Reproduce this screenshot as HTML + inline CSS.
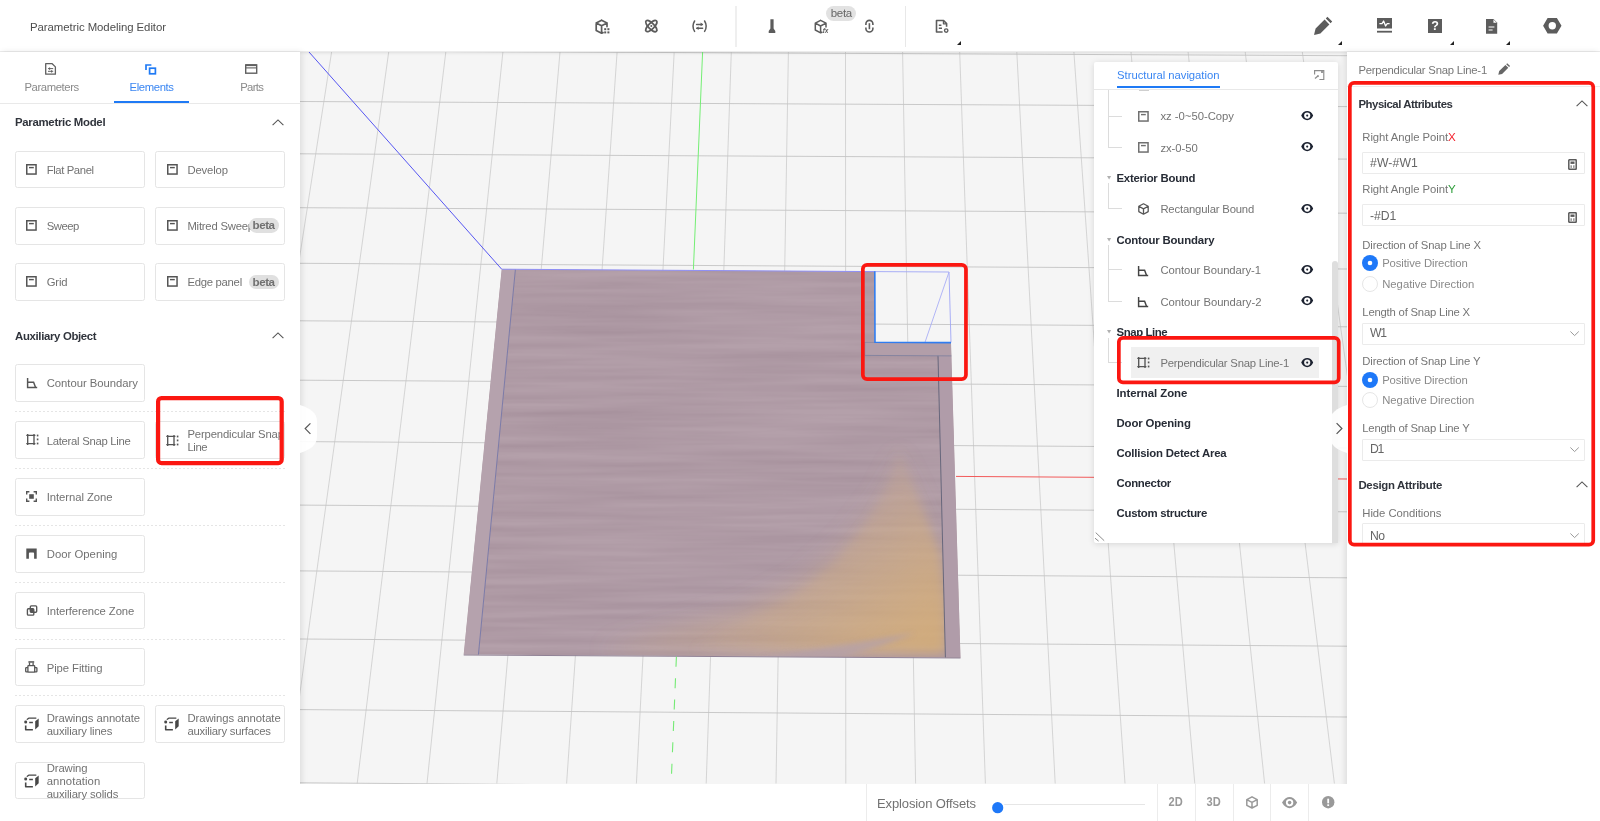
<!DOCTYPE html>
<html lang="en"><head><meta charset="utf-8"><title>Parametric Modeling Editor</title>
<style>
html,body{margin:0;padding:0;width:1600px;height:821px;overflow:hidden;background:#fff;font-family:"Liberation Sans", sans-serif;}
.t{position:absolute;white-space:nowrap;line-height:16px;}
svg{overflow:visible}
#app{position:absolute;left:0;top:0;width:1600px;height:821px;will-change:transform;}
</style></head><body><div id="app">
<svg style="position:absolute;left:300px;top:52px;background:#f5f5f5;overflow:hidden" width="1047" height="731.5" viewBox="0 0 1047 731.5"><g stroke="#c4c4c4" stroke-width="0.9" fill="none"><line x1="-139.7" y1="0" x2="-291.8" y2="731.5" stroke="#cbcbcb" stroke-width="0.8"/><line x1="-82.6" y1="0" x2="-222.0" y2="731.5" stroke="#cbcbcb" stroke-width="0.8"/><line x1="-25.5" y1="0" x2="-152.2" y2="731.5" stroke="#cbcbcb" stroke-width="0.8"/><line x1="31.6" y1="0" x2="-82.4" y2="731.5" stroke="#cbcbcb" stroke-width="0.8"/><line x1="88.7" y1="0" x2="-12.6" y2="731.5" stroke="#cbcbcb" stroke-width="0.8"/><line x1="145.8" y1="0" x2="57.2" y2="731.5" stroke="#cbcbcb" stroke-width="0.8"/><line x1="202.9" y1="0" x2="127.0" y2="731.5" stroke="#cbcbcb" stroke-width="0.8"/><line x1="260.0" y1="0" x2="196.8" y2="731.5" stroke="#cbcbcb" stroke-width="0.8"/><line x1="317.1" y1="0" x2="266.6" y2="731.5" stroke="#cbcbcb" stroke-width="0.8"/><line x1="374.2" y1="0" x2="336.4" y2="731.5" stroke="#cbcbcb" stroke-width="0.8"/><line x1="431.3" y1="0" x2="406.2" y2="731.5" stroke="#cbcbcb" stroke-width="0.8"/><line x1="488.4" y1="0" x2="476.0" y2="731.5" stroke="#cbcbcb" stroke-width="0.8"/><line x1="545.5" y1="0" x2="545.8" y2="731.5" stroke="#cbcbcb" stroke-width="0.8"/><line x1="602.6" y1="0" x2="615.6" y2="731.5" stroke="#cbcbcb" stroke-width="0.8"/><line x1="659.7" y1="0" x2="685.4" y2="731.5" stroke="#cbcbcb" stroke-width="0.8"/><line x1="716.8" y1="0" x2="755.2" y2="731.5" stroke="#cbcbcb" stroke-width="0.8"/><line x1="773.9" y1="0" x2="825.0" y2="731.5" stroke="#cbcbcb" stroke-width="0.8"/><line x1="831.0" y1="0" x2="894.8" y2="731.5" stroke="#cbcbcb" stroke-width="0.8"/><line x1="888.1" y1="0" x2="964.6" y2="731.5" stroke="#cbcbcb" stroke-width="0.8"/><line x1="945.2" y1="0" x2="1034.4" y2="731.5" stroke="#cbcbcb" stroke-width="0.8"/><line x1="1002.3" y1="0" x2="1104.2" y2="731.5" stroke="#cbcbcb" stroke-width="0.8"/><line x1="1059.4" y1="0" x2="1174.0" y2="731.5" stroke="#cbcbcb" stroke-width="0.8"/><line x1="1116.5" y1="0" x2="1243.8" y2="731.5" stroke="#cbcbcb" stroke-width="0.8"/><line x1="1173.6" y1="0" x2="1313.6" y2="731.5" stroke="#cbcbcb" stroke-width="0.8"/><line x1="0" y1="-1.2" x2="1047" y2="3.7"/><line x1="0" y1="49.5" x2="1047" y2="54.6"/><line x1="0" y1="101.8" x2="1047" y2="107.1"/><line x1="0" y1="155.7" x2="1047" y2="161.2"/><line x1="0" y1="211.3" x2="1047" y2="217.0"/><line x1="0" y1="268.8" x2="1047" y2="274.8"/><line x1="0" y1="328.2" x2="1047" y2="334.4"/><line x1="0" y1="389.6" x2="1047" y2="396.0"/><line x1="0" y1="453.1" x2="1047" y2="459.8"/><line x1="0" y1="518.9" x2="1047" y2="525.8"/><line x1="0" y1="587.0" x2="1047" y2="594.2"/><line x1="0" y1="657.6" x2="1047" y2="665.0"/><line x1="0" y1="730.8" x2="1047" y2="738.5"/></g><defs>
<filter id="grain" x="0" y="0" width="100%" height="100%" color-interpolation-filters="sRGB"><feTurbulence type="fractalNoise" baseFrequency="0.005 0.12" numOctaves="3" seed="11" result="n"/><feColorMatrix in="n" type="matrix" values="0 0 0 0 0.50  0 0 0 0 0.40  0 0 0 0 0.46  0.36 0 0 0 -0.085"/></filter>
<filter id="blur6" x="-20%" y="-20%" width="140%" height="140%"><feGaussianBlur stdDeviation="5"/></filter>
<filter id="blur12" x="-30%" y="-30%" width="160%" height="160%"><feGaussianBlur stdDeviation="11"/></filter>
<linearGradient id="og2" gradientUnits="userSpaceOnUse" x1="500" y1="440" x2="560" y2="620"><stop offset="0" stop-color="#dab278" stop-opacity="0.05"/><stop offset="1" stop-color="#dab278" stop-opacity="0.45"/></linearGradient>
<filter id="blur3" x="-20%" y="-20%" width="140%" height="140%"><feGaussianBlur stdDeviation="2.5"/></filter>
<linearGradient id="og" gradientUnits="userSpaceOnUse" x1="520" y1="465" x2="640" y2="575"><stop offset="0" stop-color="#dab278" stop-opacity="0.04"/><stop offset="0.5" stop-color="#dab278" stop-opacity="0.36"/><stop offset="1" stop-color="#d6ae76" stop-opacity="0.74"/></linearGradient>
<clipPath id="woodclip"><polygon points="201.7,217.2 574.7,219.6 574.9,290.2 651.0,290.7 660.5,605.7 163.7,602.6"/></clipPath>
</defs><polygon points="201.7,217.2 574.7,219.6 574.9,290.2 651.0,290.7 660.5,605.7 163.7,602.6" fill="#b4a0aa"/><g clip-path="url(#woodclip)"><rect x="150" y="210" width="520" height="400" filter="url(#grain)" opacity="1"/><polygon points="598.7,394.0 640.0,502.0 644.8,548.0 645.2,601.0 300.0,599.0 360.0,580.0 440.0,558.0 500.0,528.0 545.0,488.0 578.0,443.0" fill="url(#og2)" filter="url(#blur12)"/><polygon points="598.7,396.0 640.0,502.0 644.8,548.0 645.2,601.0 390.0,598.0 430.0,574.0 490.0,546.0 535.0,510.0 568.0,468.0 588.0,432.0" fill="url(#og)" filter="url(#blur6)"/><polygon points="460.0,606.0 615.0,581.0 580.0,594.0 540.0,606.0" fill="#b4a0aa" opacity="0.7" filter="url(#blur3)"/><polygon points="201.7,217.2 215.4,217.3 178.4,602.7 163.7,602.6" fill="#b5a2ad"/><polygon points="638.0,303.8 651.4,303.9 660.5,605.7 645.4,605.6" fill="#b09ca9"/><polygon points="564.6,290.2 651.0,290.7 651.4,303.9 564.6,303.4" fill="#b29ea9"/></g><g stroke="#6f73a8" stroke-width="0.9" fill="none" opacity="0.9"><line x1="215.39999999999998" y1="217.3" x2="178.39999999999998" y2="602.7"/><line x1="638" y1="303.8" x2="645.4" y2="605.6" stroke="#565a72"/><line x1="564.6" y1="303.4" x2="651.4" y2="303.9" stroke="#7c7f9e"/><line x1="564.6" y1="290.4" x2="575" y2="290.4" stroke="#8a86a0"/><line x1="564.8" y1="290.2" x2="564.8" y2="303" stroke="#8a86a0"/></g><line x1="163.7" y1="603" x2="660.5" y2="606" stroke="#8f8094" stroke-width="1"/><line x1="9" y1="0" x2="201.7" y2="217.2" stroke="#5656f2" stroke-width="1"/><line x1="201.7" y1="217.2" x2="574.7" y2="219.60000000000002" stroke="#8f8ff5" stroke-width="1"/><line x1="402.6" y1="0" x2="393.4" y2="217.5" stroke="#74ee74" stroke-width="1"/><line x1="376.4" y1="604.8" x2="371.5" y2="723" stroke="#74ea74" stroke-width="1.1" stroke-dasharray="10 11.4"/><line x1="656" y1="424.4" x2="1047" y2="427" stroke="#f25a5a" stroke-width="1"/><polyline points="574.8,219.6 649.0,220.0 651.0,290.5" fill="none" stroke="#9fa6f6" stroke-width="0.9"/><line x1="649" y1="220" x2="625" y2="290.3" stroke="#a9aef6" stroke-width="0.9"/><polyline points="574.8,219.2 575.0,290.3 651.0,290.6" fill="none" stroke="#2f7cf0" stroke-width="1.6"/></svg>
<div style="position:absolute;left:0px;top:0px;width:1600px;height:52px;background:#fff;box-shadow:0 1px 3px rgba(0,0,0,0.10);border-bottom:1px solid #ececec;box-sizing:border-box;"></div>
<span class="t" style="left:30.00px;top:18.75px;font-size:11.4px;font-weight:400;color:#4d4d4d;letter-spacing:-0.053px;">Parametric Modeling Editor</span>
<div style="position:absolute;left:735.3px;top:5.8px;width:1.5px;height:41px;background:#efefef"></div>
<div style="position:absolute;left:905px;top:5.8px;width:1.1px;height:41px;background:#e8e8e8"></div>
<div style="position:absolute;left:826.3px;top:5.7px;width:29.6px;height:15px;background:#e2e2e2;border-radius:7.5px;"></div>
<span class="t" style="left:830.70px;top:4.65px;font-size:11.5px;font-weight:400;color:#666;letter-spacing:-0.298px;">beta</span>
<svg style="position:absolute;left:594px;top:18px;" width="17" height="17" viewBox="0 0 17 17"><g fill="none" stroke="#5c5c5c" stroke-width="1.7" stroke-linejoin="round" stroke-linecap="round"><path d="M7.6 2.2 L13 5 L13 8.6 M9 14.6 L7.6 15.2 L2.2 12.4 L2.2 5 L7.6 2.2 M2.2 5 L7.6 7.8 L13 5 M7.6 7.8 L7.6 15.2"/></g><g fill="#5c5c5c"><rect x="10.2" y="10.2" width="2" height="2"/><rect x="13.4" y="10.2" width="2" height="2"/><rect x="10.2" y="13.4" width="2" height="2"/><rect x="13.4" y="13.4" width="2" height="2"/></g></svg>
<svg style="position:absolute;left:644px;top:19px;" width="14" height="14" viewBox="0 0 14 14"><g fill="none" stroke="#5c5c5c" stroke-width="1.7"><ellipse cx="7.3" cy="7.1" rx="7.3" ry="2.9" transform="rotate(45 7.3 7.1)"/><ellipse cx="7.3" cy="7.1" rx="7.3" ry="2.9" transform="rotate(-45 7.3 7.1)"/></g><circle cx="7.3" cy="7.1" r="1" fill="#5c5c5c"/></svg>
<svg style="position:absolute;left:692px;top:20px;" width="15" height="12" viewBox="0 0 15 12"><g fill="none" stroke="#5c5c5c" stroke-width="1.5" stroke-linecap="round"><path d="M2.6 1 Q-0.6 6.2 2.6 11.4"/><path d="M12.6 1 Q15.8 6.2 12.6 11.4"/><path d="M4.6 4.4 L10.4 4.4 M4.8 8.2 L10.6 8.2"/></g><path d="M8.6 2.6 L11.2 4.4 L8.6 6.2 Z M6.6 6.4 L4 8.2 L6.6 10 Z" fill="#5c5c5c"/></svg>
<svg style="position:absolute;left:768px;top:19px;" width="8" height="14" viewBox="0 0 8 14"><path d="M2.4 0.2 H5.6 V9.6 L7.3 12 V13.9 H0.7 V12 L2.4 9.6 Z" fill="#5c5c5c"/></svg>
<svg style="position:absolute;left:814px;top:19px;" width="16" height="15" viewBox="0 0 16 15"><g fill="none" stroke="#5c5c5c" stroke-width="1.5" stroke-linejoin="round" stroke-linecap="round"><path d="M6.6 1.4 L12 4.2 L12 8 M8 13.2 L6.6 13.8 L1.3 11 L1.3 4.2 L6.6 1.4 M1.3 4.2 L6.6 7 L12 4.2 M6.6 7 L6.6 13.8"/></g></svg>
<span class="t" style="left:822.80px;top:23.25px;font-size:6.5px;font-weight:700;color:#5c5c5c;font-style:italic;letter-spacing:-0.2px;">fx</span>
<svg style="position:absolute;left:864px;top:19px;" width="11" height="15" viewBox="0 0 11 15"><g fill="none" stroke="#5c5c5c" stroke-width="1.6" stroke-linecap="butt"><path d="M1.9 6 V4.9 A3.5 3.5 0 0 1 8.9 4.9 V6"/><path d="M1.9 8.4 V9.5 A3.5 3.5 0 0 0 8.9 9.5 V8.4"/><path d="M5.4 4.2 V10.2"/></g></svg>
<svg style="position:absolute;left:935px;top:19px;" width="15" height="15" viewBox="0 0 15 15"><g fill="none" stroke="#5c5c5c" stroke-width="1.6" stroke-linejoin="round"><path d="M7.6 13 H1.5 V1.5 H8.6 L11.6 4.6 V7.8"/><path d="M8.4 1.8 V4.8 H11.4" stroke-width="1.2"/><path d="M3.8 6.2 H6.4 M3.8 9.2 H7" stroke-width="1.4"/><circle cx="11.2" cy="11.6" r="1.7" stroke-width="1.4"/></g></svg>
<svg style="position:absolute;left:957.2px;top:41px;" width="4" height="4" viewBox="0 0 4 4"><polygon points="4,0 4,4 0,4" fill="#222"/></svg>
<svg style="position:absolute;left:1313px;top:16px;" width="20" height="20" viewBox="0 0 20 20"><path d="M1 19 L2.6 12.6 L11.6 3.6 L16.4 8.4 L7.4 17.4 Z M12.8 2.4 L14.4 0.8 L19.2 5.6 L17.6 7.2 Z" fill="#5c5c5c"/></svg>
<svg style="position:absolute;left:1337.5px;top:41px;" width="4" height="4" viewBox="0 0 4 4"><polygon points="4,0 4,4 0,4" fill="#222"/></svg>
<svg style="position:absolute;left:1377px;top:18px;" width="15" height="15" viewBox="0 0 15 15"><rect x="0" y="0" width="15" height="10.5" fill="#5c5c5c"/><rect x="0" y="12.8" width="15" height="1.8" fill="#5c5c5c"/><path d="M2.4 5.6 H5 L6.6 3 L8.6 8 L10.2 5.6 H12.6" fill="none" stroke="#fff" stroke-width="1.3" stroke-linejoin="round"/></svg>
<div style="position:absolute;left:1427.7px;top:18.5px;width:14.6px;height:14.6px;background:#5c5c5c;"></div>
<span class="t" style="left:1431.18px;top:17.65px;font-size:12.5px;font-weight:700;color:#fff;">?</span>
<svg style="position:absolute;left:1450px;top:41px;" width="4" height="4" viewBox="0 0 4 4"><polygon points="4,0 4,4 0,4" fill="#222"/></svg>
<svg style="position:absolute;left:1485.8px;top:18.5px;" width="11.2" height="14.8" viewBox="0 0 11.2 14.8"><path d="M0 0 H7.2 L11.2 4 V14.8 H0 Z" fill="#5c5c5c"/><path d="M7.2 0 V4 H11.2 Z" fill="#fff" stroke="#5c5c5c" stroke-width="0.5"/><path d="M2.6 8 H8.4 M2.6 11 H6.6" stroke="#fff" stroke-width="1.2"/></svg>
<svg style="position:absolute;left:1506px;top:41px;" width="4" height="4" viewBox="0 0 4 4"><polygon points="4,0 4,4 0,4" fill="#222"/></svg>
<svg style="position:absolute;left:1543px;top:18px;" width="18.6" height="15.6" viewBox="0 0 18.6 15.6"><path fill-rule="evenodd" d="M0.1 7.8 L4.6 0 H13.9 L18.5 7.8 L13.9 15.6 H4.6 Z M9.3 4.1 A3.7 3.7 0 1 0 9.3 11.5 A3.7 3.7 0 1 0 9.3 4.1 Z" fill="#5c5c5c"/></svg>
<div style="position:absolute;left:0px;top:52px;width:300px;height:769px;background:#fff;box-shadow:2px 0 6px rgba(0,0,0,0.10);"></div>
<div style="position:absolute;left:0px;top:103px;width:300px;height:1px;background:#e9e9e9;"></div>
<div style="position:absolute;left:114.2px;top:101px;width:75.1px;height:2.3px;background:#1f7af5;"></div>
<span class="t" style="left:24.45px;top:78.65px;font-size:11.3px;font-weight:400;color:#8a8a8a;letter-spacing:-0.409px;">Parameters</span>
<span class="t" style="left:129.60px;top:78.65px;font-size:11.3px;font-weight:400;color:#3a86f2;letter-spacing:-0.387px;">Elements</span>
<span class="t" style="left:240.20px;top:78.65px;font-size:11.3px;font-weight:400;color:#8a8a8a;letter-spacing:-0.635px;">Parts</span>
<svg style="position:absolute;left:45px;top:63.4px;" width="11.2" height="12" viewBox="0 0 11.2 12"><path d="M0.7 0.7 H7.2 L10.4 3.9 V11.2 H0.7 Z" fill="none" stroke="#606060" stroke-width="1.3" stroke-linejoin="round"/><path d="M3 5.6 H8.2 M3 8.3 H8.2" stroke="#606060" stroke-width="1"/><path d="M4.6 4.5 V6.7 M6.6 7.2 V9.4" stroke="#606060" stroke-width="1.1"/></svg>
<svg style="position:absolute;left:145px;top:64.3px;" width="11.4" height="10.6" viewBox="0 0 11.4 10.6"><path d="M1 6 V1 H6.4" fill="none" stroke="#1f7af5" stroke-width="1.7"/><rect x="4.6" y="4.2" width="5.8" height="5.6" fill="none" stroke="#1f7af5" stroke-width="1.7"/></svg>
<svg style="position:absolute;left:244.6px;top:64.4px;" width="12.4" height="10" viewBox="0 0 12.4 10"><rect x="0.7" y="0.9" width="11" height="8.3" fill="none" stroke="#606060" stroke-width="1.4"/><path d="M0.7 1.2 H11.7" stroke="#606060" stroke-width="1.8"/><path d="M0.7 3.9 H11.7" stroke="#606060" stroke-width="1.1"/></svg>
<span class="t" style="left:15.00px;top:114.45px;font-size:11.4px;font-weight:700;color:#30343c;letter-spacing:-0.292px;">Parametric Model</span>
<svg style="position:absolute;left:272.4px;top:118.8px;" width="12" height="7" viewBox="0 0 12 7"><path d="M0.6 6.2 L6 0.9 L11.4 6.2" fill="none" stroke="#555" stroke-width="1.1"/></svg>
<div style="position:absolute;left:15px;top:151px;width:129.5px;height:37px;border:1px solid #e5e5e5;border-radius:2.5px;box-sizing:border-box;background:#fff;"></div>
<div style="position:absolute;left:155.2px;top:151px;width:129.6px;height:37px;border:1px solid #e5e5e5;border-radius:2.5px;box-sizing:border-box;background:#fff;"></div>
<svg style="position:absolute;left:26.2px;top:163.9px;" width="11" height="11" viewBox="0 0 11 11"><rect x="0.75" y="0.75" width="9.3" height="9.3" fill="none" stroke="#555" stroke-width="1.5"/><rect x="3" y="2.9" width="4.8" height="1.4" fill="#555"/></svg>
<svg style="position:absolute;left:166.8px;top:163.9px;" width="11" height="11" viewBox="0 0 11 11"><rect x="0.75" y="0.75" width="9.3" height="9.3" fill="none" stroke="#555" stroke-width="1.5"/><rect x="3" y="2.9" width="4.8" height="1.4" fill="#555"/></svg>
<span class="t" style="left:46.70px;top:161.95px;font-size:11.3px;font-weight:400;color:#727272;letter-spacing:-0.388px;">Flat Panel</span>
<span class="t" style="left:187.40px;top:161.95px;font-size:11.3px;font-weight:400;color:#727272;letter-spacing:-0.136px;">Develop</span>
<div style="position:absolute;left:15px;top:207px;width:129.5px;height:38px;border:1px solid #e5e5e5;border-radius:2.5px;box-sizing:border-box;background:#fff;"></div>
<div style="position:absolute;left:155.2px;top:207px;width:129.6px;height:38px;border:1px solid #e5e5e5;border-radius:2.5px;box-sizing:border-box;background:#fff;"></div>
<svg style="position:absolute;left:26.2px;top:219.9px;" width="11" height="11" viewBox="0 0 11 11"><rect x="0.75" y="0.75" width="9.3" height="9.3" fill="none" stroke="#555" stroke-width="1.5"/><rect x="3" y="2.9" width="4.8" height="1.4" fill="#555"/></svg>
<svg style="position:absolute;left:166.8px;top:219.9px;" width="11" height="11" viewBox="0 0 11 11"><rect x="0.75" y="0.75" width="9.3" height="9.3" fill="none" stroke="#555" stroke-width="1.5"/><rect x="3" y="2.9" width="4.8" height="1.4" fill="#555"/></svg>
<span class="t" style="left:46.70px;top:217.95px;font-size:11.3px;font-weight:400;color:#727272;letter-spacing:-0.469px;">Sweep</span>
<span class="t" style="left:187.40px;top:217.95px;font-size:11.3px;font-weight:400;color:#727272;letter-spacing:-0.215px;">Mitred Sweep</span>
<div style="position:absolute;left:15px;top:263px;width:129.5px;height:38px;border:1px solid #e5e5e5;border-radius:2.5px;box-sizing:border-box;background:#fff;"></div>
<div style="position:absolute;left:155.2px;top:263px;width:129.6px;height:38px;border:1px solid #e5e5e5;border-radius:2.5px;box-sizing:border-box;background:#fff;"></div>
<svg style="position:absolute;left:26.2px;top:275.9px;" width="11" height="11" viewBox="0 0 11 11"><rect x="0.75" y="0.75" width="9.3" height="9.3" fill="none" stroke="#555" stroke-width="1.5"/><rect x="3" y="2.9" width="4.8" height="1.4" fill="#555"/></svg>
<svg style="position:absolute;left:166.8px;top:275.9px;" width="11" height="11" viewBox="0 0 11 11"><rect x="0.75" y="0.75" width="9.3" height="9.3" fill="none" stroke="#555" stroke-width="1.5"/><rect x="3" y="2.9" width="4.8" height="1.4" fill="#555"/></svg>
<span class="t" style="left:46.70px;top:273.95px;font-size:11.3px;font-weight:400;color:#727272;letter-spacing:-0.161px;">Grid</span>
<span class="t" style="left:187.40px;top:273.95px;font-size:11.3px;font-weight:400;color:#727272;letter-spacing:-0.267px;">Edge panel</span>
<div style="position:absolute;left:248.7px;top:218.2px;width:30.2px;height:14.8px;background:#e0e0e0;border-radius:7.4px;"></div>
<span class="t" style="left:252.60px;top:217.25px;font-size:11.6px;font-weight:700;color:#707070;letter-spacing:-0.461px;">beta</span>
<div style="position:absolute;left:248.7px;top:274.5px;width:30.2px;height:14.8px;background:#e0e0e0;border-radius:7.4px;"></div>
<span class="t" style="left:252.60px;top:273.55px;font-size:11.6px;font-weight:700;color:#707070;letter-spacing:-0.461px;">beta</span>
<span class="t" style="left:15.00px;top:327.95px;font-size:11.4px;font-weight:700;color:#30343c;letter-spacing:-0.340px;">Auxiliary Object</span>
<svg style="position:absolute;left:272.4px;top:332.1px;" width="12" height="7" viewBox="0 0 12 7"><path d="M0.6 6.2 L6 0.9 L11.4 6.2" fill="none" stroke="#555" stroke-width="1.1"/></svg>
<div style="position:absolute;left:15px;top:364px;width:129.5px;height:37.6px;border:1px solid #e5e5e5;border-radius:2.5px;box-sizing:border-box;background:#fff;"></div>
<svg style="position:absolute;left:25.8px;top:378.2px;" width="12" height="11" viewBox="0 0 12 11"><path d="M1.6 0 V9.5 H11.2 M1.6 4.2 H7.6 L9.6 9.5" fill="none" stroke="#555" stroke-width="1.45"/></svg>
<span class="t" style="left:46.70px;top:375.35px;font-size:11.3px;font-weight:400;color:#727272;letter-spacing:-0.031px;">Contour Boundary</span>
<div style="position:absolute;left:15px;top:411px;width:270px;height:1px;background:repeating-linear-gradient(90deg,#e5e5e5 0 2px,transparent 2px 4px);"></div>
<div style="position:absolute;left:15px;top:421.2px;width:129.5px;height:37.6px;border:1px solid #e5e5e5;border-radius:2.5px;box-sizing:border-box;background:#fff;"></div>
<svg style="position:absolute;left:25.8px;top:434.4px;" width="13" height="11" viewBox="0 0 13 11"><path d="M1.7 0.1 V10.9 M8 0.1 V10.9 M0.3 1.4 H9.4 M0.3 9.6 H9.4" fill="none" stroke="#555" stroke-width="1.35"/><g fill="#555"><rect x="10.8" y="0.6" width="1.6" height="1.8"/><rect x="10.8" y="4.5" width="1.6" height="1.8"/><rect x="10.8" y="8.6" width="1.6" height="1.8"/></g></svg>
<span class="t" style="left:46.70px;top:432.55px;font-size:11.3px;font-weight:400;color:#727272;letter-spacing:-0.280px;">Lateral Snap Line</span>
<div style="position:absolute;left:15px;top:468px;width:270px;height:1px;background:repeating-linear-gradient(90deg,#e5e5e5 0 2px,transparent 2px 4px);"></div>
<div style="position:absolute;left:15px;top:478px;width:129.5px;height:37.6px;border:1px solid #e5e5e5;border-radius:2.5px;box-sizing:border-box;background:#fff;"></div>
<svg style="position:absolute;left:25.8px;top:491.2px;" width="11" height="11" viewBox="0 0 11 11"><path d="M0.7 3.4 V0.7 H3.4 M7.6 0.7 H10.3 V3.4 M10.3 7.6 V10.3 H7.6 M3.4 10.3 H0.7 V7.6" fill="none" stroke="#555" stroke-width="1.4"/><rect x="3.2" y="3.2" width="4.6" height="4.6" fill="#555"/></svg>
<span class="t" style="left:46.70px;top:489.35px;font-size:11.3px;font-weight:400;color:#727272;letter-spacing:-0.068px;">Internal Zone</span>
<div style="position:absolute;left:15px;top:525px;width:270px;height:1px;background:repeating-linear-gradient(90deg,#e5e5e5 0 2px,transparent 2px 4px);"></div>
<div style="position:absolute;left:15px;top:535px;width:129.5px;height:37.6px;border:1px solid #e5e5e5;border-radius:2.5px;box-sizing:border-box;background:#fff;"></div>
<svg style="position:absolute;left:25.8px;top:548.2px;" width="11" height="11" viewBox="0 0 11 11"><path d="M0.3 0.5 H10.7 V10.7 H8.1 V5.4 Q8.1 4.5 7.2 4.5 H3.8 Q2.9 4.5 2.9 5.4 V10.7 H0.3 Z" fill="#555"/></svg>
<span class="t" style="left:46.70px;top:546.35px;font-size:11.3px;font-weight:400;color:#727272;letter-spacing:0.030px;">Door Opening</span>
<div style="position:absolute;left:15px;top:582px;width:270px;height:1px;background:repeating-linear-gradient(90deg,#e5e5e5 0 2px,transparent 2px 4px);"></div>
<div style="position:absolute;left:15px;top:591.6px;width:129.5px;height:37.6px;border:1px solid #e5e5e5;border-radius:2.5px;box-sizing:border-box;background:#fff;"></div>
<svg style="position:absolute;left:25.8px;top:604.8000000000001px;" width="12" height="11.4" viewBox="0 0 12 11.4"><g fill="none" stroke="#555" stroke-width="1.35"><rect x="4.3" y="0.9" width="6.4" height="6.4" rx="1"/><rect x="1.4" y="3.8" width="6.4" height="6.4" rx="1"/></g><rect x="4.3" y="3.8" width="3.5" height="3.5" fill="#555"/></svg>
<span class="t" style="left:46.70px;top:602.95px;font-size:11.3px;font-weight:400;color:#727272;letter-spacing:-0.099px;">Interference Zone</span>
<div style="position:absolute;left:15px;top:639px;width:270px;height:1px;background:repeating-linear-gradient(90deg,#e5e5e5 0 2px,transparent 2px 4px);"></div>
<div style="position:absolute;left:15px;top:648.2px;width:129.5px;height:37.6px;border:1px solid #e5e5e5;border-radius:2.5px;box-sizing:border-box;background:#fff;"></div>
<svg style="position:absolute;left:25.400000000000002px;top:661.3000000000001px;" width="13" height="12" viewBox="0 0 13 12"><g fill="none" stroke="#555" stroke-width="1.3"><rect x="3.4" y="0.2" width="5.8" height="1.5" fill="#555" stroke="none"/><path d="M4.5 1.6 V4.6 M8.1 1.6 V4.6"/><rect x="2.9" y="4.6" width="6.8" height="6.6" rx="0.6"/><path d="M2.9 6.6 H1.4 Q0.7 6.6 0.7 7.3 V10.2 Q0.7 10.9 1.4 10.9 H2.9 M9.7 6.6 H11.2 Q11.9 6.6 11.9 7.3 V10.2 Q11.9 10.9 11.2 10.9 H9.7"/></g></svg>
<span class="t" style="left:46.70px;top:659.55px;font-size:11.3px;font-weight:400;color:#727272;letter-spacing:-0.068px;">Pipe Fitting</span>
<div style="position:absolute;left:15px;top:695px;width:270px;height:1px;background:repeating-linear-gradient(90deg,#e5e5e5 0 2px,transparent 2px 4px);"></div>
<div style="position:absolute;left:155.2px;top:421.2px;width:129.6px;height:37.6px;border:1px solid #e5e5e5;border-radius:2.5px;box-sizing:border-box;background:#fff;"></div>
<svg style="position:absolute;left:166.2px;top:434.6px;" width="13" height="11" viewBox="0 0 13 11"><path d="M1.7 0.1 V10.9 M8 0.1 V10.9 M0.3 1.4 H9.4 M0.3 9.6 H9.4" fill="none" stroke="#555" stroke-width="1.35"/><g fill="#555"><rect x="10.8" y="0.6" width="1.6" height="1.8"/><rect x="10.8" y="4.5" width="1.6" height="1.8"/><rect x="10.8" y="8.6" width="1.6" height="1.8"/></g></svg>
<span class="t" style="left:187.40px;top:425.85px;font-size:11.3px;font-weight:400;color:#727272;letter-spacing:-0.152px;clip-path:inset(0 3px 0 0);">Perpendicular Snap</span>
<span class="t" style="left:187.40px;top:439.05px;font-size:11.3px;font-weight:400;color:#727272;letter-spacing:-0.390px;">Line</span>
<div style="position:absolute;left:15px;top:704.6px;width:129.5px;height:38px;border:1px solid #e5e5e5;border-radius:2.5px;box-sizing:border-box;background:#fff;"></div>
<div style="position:absolute;left:155.2px;top:704.6px;width:129.6px;height:38px;border:1px solid #e5e5e5;border-radius:2.5px;box-sizing:border-box;background:#fff;"></div>
<svg style="position:absolute;left:24px;top:717.3px;" width="15.4" height="14" viewBox="0 0 15.4 14"><path d="M3.3 2.3 L5.1 1.05 H11.9" fill="none" stroke="#484848" stroke-width="1.35" stroke-linejoin="round" stroke-linecap="round"/><path d="M11.2 4.3 L14.7 1.4 V9.3 L11.2 12.5 Z" fill="#484848"/><path d="M1.7 8.6 V12.8 H8.9" fill="none" stroke="#484848" stroke-width="1.6" stroke-linejoin="round"/><circle cx="1.7" cy="5.1" r="1.5" fill="#484848"/><path d="M5.2 5.5 H8.9" stroke="#484848" stroke-width="1.5"/></svg>
<svg style="position:absolute;left:164.4px;top:717.3px;" width="15.4" height="14" viewBox="0 0 15.4 14"><path d="M3.3 2.3 L5.1 1.05 H11.9" fill="none" stroke="#484848" stroke-width="1.35" stroke-linejoin="round" stroke-linecap="round"/><path d="M11.2 4.3 L14.7 1.4 V9.3 L11.2 12.5 Z" fill="#484848"/><path d="M1.7 8.6 V12.8 H8.9" fill="none" stroke="#484848" stroke-width="1.6" stroke-linejoin="round"/><circle cx="1.7" cy="5.1" r="1.5" fill="#484848"/><path d="M5.2 5.5 H8.9" stroke="#484848" stroke-width="1.5"/></svg>
<span class="t" style="left:46.70px;top:710.25px;font-size:11.3px;font-weight:400;color:#727272;letter-spacing:-0.053px;">Drawings annotate</span>
<span class="t" style="left:46.70px;top:723.15px;font-size:11.3px;font-weight:400;color:#727272;letter-spacing:-0.154px;">auxiliary lines</span>
<span class="t" style="left:187.40px;top:710.25px;font-size:11.3px;font-weight:400;color:#727272;letter-spacing:-0.053px;">Drawings annotate</span>
<span class="t" style="left:187.40px;top:723.15px;font-size:11.3px;font-weight:400;color:#727272;letter-spacing:-0.221px;">auxiliary surfaces</span>
<div style="position:absolute;left:15px;top:761.6px;width:129.5px;height:37.6px;border:1px solid #e5e5e5;border-radius:2.5px;box-sizing:border-box;background:#fff;"></div>
<svg style="position:absolute;left:24px;top:773.8px;" width="15.4" height="14" viewBox="0 0 15.4 14"><path d="M3.3 2.3 L5.1 1.05 H11.9" fill="none" stroke="#484848" stroke-width="1.35" stroke-linejoin="round" stroke-linecap="round"/><path d="M11.2 4.3 L14.7 1.4 V9.3 L11.2 12.5 Z" fill="#484848"/><path d="M1.7 8.6 V12.8 H8.9" fill="none" stroke="#484848" stroke-width="1.6" stroke-linejoin="round"/><circle cx="1.7" cy="5.1" r="1.5" fill="#484848"/><path d="M5.2 5.5 H8.9" stroke="#484848" stroke-width="1.5"/></svg>
<span class="t" style="left:46.70px;top:759.65px;font-size:11.3px;font-weight:400;color:#727272;letter-spacing:-0.105px;">Drawing</span>
<span class="t" style="left:46.70px;top:772.75px;font-size:11.3px;font-weight:400;color:#727272;letter-spacing:0.092px;">annotation</span>
<span class="t" style="left:46.70px;top:785.85px;font-size:11.3px;font-weight:400;color:#727272;letter-spacing:-0.123px;">auxiliary solids</span>
<svg style="position:absolute;left:300px;top:405px;" width="18" height="48" viewBox="0 0 18 48"><path d="M0 0 C10 3 17 8 17 16 V32 C17 40 10 45 0 48 Z" fill="#fff" fill-opacity="0.92"/><path d="M10.4 18.4 L5.2 23.6 L10.4 28.8" fill="none" stroke="#555" stroke-width="1.2"/></svg>
<div style="position:absolute;left:1347px;top:52px;width:253px;height:769px;background:#fff;box-shadow:-2px 0 6px rgba(0,0,0,0.10);"></div>
<span class="t" style="left:1358.40px;top:61.55px;font-size:11.3px;font-weight:400;color:#777;letter-spacing:-0.207px;">Perpendicular Snap Line-1</span>
<svg style="position:absolute;left:1498px;top:63.3px;" width="12.4" height="12" viewBox="0 0 12.4 12"><path d="M0.3 11.8 L1.2 8 L7.4 1.9 L10.3 4.8 L4.1 11 Z M8.2 1.2 L9.2 0.2 L12.1 3.1 L11.1 4.1 Z" fill="#666"/></svg>
<div style="position:absolute;left:1347px;top:86px;width:253px;height:1px;background:#ececec;"></div>
<span class="t" style="left:1358.40px;top:95.95px;font-size:11.4px;font-weight:700;color:#30343c;letter-spacing:-0.461px;">Physical Attributes</span>
<svg style="position:absolute;left:1576.3px;top:100.1px;" width="12" height="7" viewBox="0 0 12 7"><path d="M0.6 6.2 L6 0.9 L11.4 6.2" fill="none" stroke="#555" stroke-width="1.1"/></svg>
<span class="t" style="left:1362.30px;top:128.85px;font-size:11.3px;font-weight:400;color:#767676;letter-spacing:-0.057px;">Right Angle Point</span>
<span class="t" style="left:1448.10px;top:128.85px;font-size:11.6px;font-weight:400;color:#f5222d;">X</span>
<div style="position:absolute;left:1361.9px;top:152px;width:223.1px;height:22px;border:1px solid #ebebeb;border-radius:1px;box-sizing:border-box;background:#fff;"></div>
<span class="t" style="left:1370.00px;top:155.35px;font-size:12.2px;font-weight:400;color:#666;letter-spacing:0.135px;">#W-#W1</span>
<svg style="position:absolute;left:1568.3px;top:159.20000000000002px;" width="9" height="11" viewBox="0 0 9 11"><rect x="0.8" y="0.8" width="7.4" height="9.4" rx="0.5" fill="none" stroke="#5a5a5a" stroke-width="1.5"/><rect x="2.5" y="2.5" width="4" height="2.4" fill="#5a5a5a"/><g fill="#5a5a5a" opacity="0.75"><rect x="2.5" y="6.3" width="1.3" height="2.6"/><rect x="5.2" y="6.3" width="1.3" height="2.6"/></g></svg>
<span class="t" style="left:1362.30px;top:181.25px;font-size:11.3px;font-weight:400;color:#767676;letter-spacing:-0.057px;">Right Angle Point</span>
<span class="t" style="left:1448.10px;top:181.25px;font-size:11.6px;font-weight:400;color:#2e9e3a;">Y</span>
<div style="position:absolute;left:1361.9px;top:204px;width:223.1px;height:22px;border:1px solid #ebebeb;border-radius:1px;box-sizing:border-box;background:#fff;"></div>
<span class="t" style="left:1370.00px;top:207.65px;font-size:12.2px;font-weight:400;color:#666;letter-spacing:-0.005px;">-#D1</span>
<svg style="position:absolute;left:1568.3px;top:211.8px;" width="9" height="11" viewBox="0 0 9 11"><rect x="0.8" y="0.8" width="7.4" height="9.4" rx="0.5" fill="none" stroke="#5a5a5a" stroke-width="1.5"/><rect x="2.5" y="2.5" width="4" height="2.4" fill="#5a5a5a"/><g fill="#5a5a5a" opacity="0.75"><rect x="2.5" y="6.3" width="1.3" height="2.6"/><rect x="5.2" y="6.3" width="1.3" height="2.6"/></g></svg>
<span class="t" style="left:1362.30px;top:236.65px;font-size:11.3px;font-weight:400;color:#767676;letter-spacing:-0.139px;">Direction of Snap Line X</span>
<svg style="position:absolute;left:1362px;top:255.10000000000002px;" width="16" height="16" viewBox="0 0 16 16"><circle cx="8" cy="8" r="8" fill="#1e78f8"/><circle cx="8" cy="8" r="2.3" fill="#fff"/></svg>
<span class="t" style="left:1382.20px;top:255.35px;font-size:11.3px;font-weight:400;color:#8a8a8a;letter-spacing:-0.105px;">Positive Direction</span>
<svg style="position:absolute;left:1362px;top:276px;" width="16" height="16" viewBox="0 0 16 16"><circle cx="8" cy="8" r="7.5" fill="#fff" stroke="#e6e6e6" stroke-width="1"/></svg>
<span class="t" style="left:1382.20px;top:275.95px;font-size:11.3px;font-weight:400;color:#8a8a8a;letter-spacing:-0.006px;">Negative Direction</span>
<span class="t" style="left:1362.30px;top:304.05px;font-size:11.3px;font-weight:400;color:#767676;letter-spacing:-0.201px;">Length of Snap Line X</span>
<div style="position:absolute;left:1361.9px;top:323px;width:223.1px;height:22px;border:1px solid #ebebeb;border-radius:1px;box-sizing:border-box;background:#fff;"></div>
<span class="t" style="left:1370.00px;top:325.25px;font-size:12.2px;font-weight:400;color:#666;letter-spacing:-1.341px;">W1</span>
<svg style="position:absolute;left:1570.4px;top:331.2px;" width="9.2" height="5.2" viewBox="0 0 9.2 5.2"><path d="M0.4 0.5 L4.6 4.6 L8.8 0.5" fill="none" stroke="#999" stroke-width="1"/></svg>
<span class="t" style="left:1362.30px;top:352.65px;font-size:11.3px;font-weight:400;color:#767676;letter-spacing:-0.151px;">Direction of Snap Line Y</span>
<svg style="position:absolute;left:1362px;top:371.8px;" width="16" height="16" viewBox="0 0 16 16"><circle cx="8" cy="8" r="8" fill="#1e78f8"/><circle cx="8" cy="8" r="2.3" fill="#fff"/></svg>
<span class="t" style="left:1382.20px;top:371.85px;font-size:11.3px;font-weight:400;color:#8a8a8a;letter-spacing:-0.105px;">Positive Direction</span>
<svg style="position:absolute;left:1362px;top:392.4px;" width="16" height="16" viewBox="0 0 16 16"><circle cx="8" cy="8" r="7.5" fill="#fff" stroke="#e6e6e6" stroke-width="1"/></svg>
<span class="t" style="left:1382.20px;top:392.25px;font-size:11.3px;font-weight:400;color:#8a8a8a;letter-spacing:-0.006px;">Negative Direction</span>
<span class="t" style="left:1362.30px;top:419.95px;font-size:11.3px;font-weight:400;color:#767676;letter-spacing:-0.210px;">Length of Snap Line Y</span>
<div style="position:absolute;left:1361.9px;top:439px;width:223.1px;height:22px;border:1px solid #ebebeb;border-radius:1px;box-sizing:border-box;background:#fff;"></div>
<span class="t" style="left:1370.00px;top:441.45px;font-size:12.2px;font-weight:400;color:#666;letter-spacing:-1.397px;">D1</span>
<svg style="position:absolute;left:1570.4px;top:447.4px;" width="9.2" height="5.2" viewBox="0 0 9.2 5.2"><path d="M0.4 0.5 L4.6 4.6 L8.8 0.5" fill="none" stroke="#999" stroke-width="1"/></svg>
<span class="t" style="left:1358.40px;top:476.85px;font-size:11.4px;font-weight:700;color:#30343c;letter-spacing:-0.286px;">Design Attribute</span>
<svg style="position:absolute;left:1576.3px;top:481.3px;" width="12" height="7" viewBox="0 0 12 7"><path d="M0.6 6.2 L6 0.9 L11.4 6.2" fill="none" stroke="#555" stroke-width="1.1"/></svg>
<span class="t" style="left:1362.30px;top:505.25px;font-size:11.3px;font-weight:400;color:#767676;letter-spacing:-0.051px;">Hide Conditions</span>
<div style="position:absolute;left:1361.9px;top:523px;width:223.1px;height:22px;border:1px solid #ebebeb;border-radius:1px;box-sizing:border-box;background:#fff;"></div>
<span class="t" style="left:1370.00px;top:527.55px;font-size:12.2px;font-weight:400;color:#666;letter-spacing:-0.597px;">No</span>
<svg style="position:absolute;left:1570.4px;top:532.6px;" width="9.2" height="5.2" viewBox="0 0 9.2 5.2"><path d="M0.4 0.5 L4.6 4.6 L8.8 0.5" fill="none" stroke="#999" stroke-width="1"/></svg>
<div style="position:absolute;left:1094px;top:61.8px;width:243.8px;height:481.4px;background:#fff;border-radius:2px;box-shadow:0 1px 6px rgba(0,0,0,0.13);"></div>
<span class="t" style="left:1117.10px;top:67.15px;font-size:11.3px;font-weight:400;color:#3a86f2;letter-spacing:-0.029px;">Structural navigation</span>
<div style="position:absolute;left:1117.1px;top:85.9px;width:102.6px;height:2.1px;background:#1f7af5;"></div>
<div style="position:absolute;left:1094px;top:89px;width:243.8px;height:1px;background:#e8e8e8;"></div>
<svg style="position:absolute;left:1313.6px;top:69.9px;" width="10.4" height="10" viewBox="0 0 10.4 10"><path d="M0.6 4.6 V0.6 H9.8 V9.5 H5.4" fill="none" stroke="#8c8c8c" stroke-width="1.15"/><rect x="7" y="1" width="2.5" height="2" fill="#9a9a9a"/><path d="M1 8.4 L4.2 5.8" stroke="#8c8c8c" stroke-width="1.3" fill="none"/><path d="M2.9 5.4 L4.9 5.2 L4.6 7.2 Z" fill="#8c8c8c"/></svg>
<div style="position:absolute;left:1108px;top:90px;width:1px;height:58px;background:#dcdcdc;"></div>
<div style="position:absolute;left:1108px;top:116px;width:13.6px;height:1px;background:#dcdcdc;"></div>
<div style="position:absolute;left:1108px;top:147.4px;width:13.6px;height:1px;background:#dcdcdc;"></div>
<div style="position:absolute;left:1138.6px;top:90px;width:10.4px;height:1px;background:#cfcfcf;"></div>
<div style="position:absolute;left:1108px;top:183px;width:1px;height:26px;background:#dcdcdc;"></div>
<div style="position:absolute;left:1108px;top:208.4px;width:13.6px;height:1px;background:#dcdcdc;"></div>
<div style="position:absolute;left:1108px;top:245px;width:1px;height:56px;background:#dcdcdc;"></div>
<div style="position:absolute;left:1108px;top:269.4px;width:13.6px;height:1px;background:#dcdcdc;"></div>
<div style="position:absolute;left:1108px;top:300.6px;width:13.6px;height:1px;background:#dcdcdc;"></div>
<div style="position:absolute;left:1108px;top:338px;width:1px;height:24.5px;background:#dcdcdc;"></div>
<div style="position:absolute;left:1108px;top:362px;width:13.6px;height:1px;background:#dcdcdc;"></div>
<svg style="position:absolute;left:1138px;top:111px;" width="11" height="11" viewBox="0 0 11 11"><rect x="0.75" y="0.75" width="9.3" height="9.3" fill="none" stroke="#707070" stroke-width="1.5"/><rect x="3" y="2.9" width="4.8" height="1.4" fill="#707070"/></svg>
<span class="t" style="left:1160.40px;top:108.25px;font-size:11.3px;font-weight:400;color:#747474;letter-spacing:-0.014px;">xz -0~50-Copy</span>
<svg style="position:absolute;left:1301.1px;top:110.9px;" width="12.4" height="9.2" viewBox="0 0 12.4 9.2"><path fill-rule="evenodd" d="M0.2 4.6 C1.4 1.4 3.8 0 6.2 0 C8.6 0 11 1.4 12.2 4.6 C11 7.8 8.6 9.2 6.2 9.2 C3.8 9.2 1.4 7.8 0.2 4.6 Z M6.2 1.5 A3.1 3.1 0 1 0 6.2 7.7 A3.1 3.1 0 1 0 6.2 1.5 Z" fill="#1c2230"/><circle cx="6.2" cy="4.6" r="1.05" fill="#1c2230"/></svg>
<svg style="position:absolute;left:1138px;top:142.3px;" width="11" height="11" viewBox="0 0 11 11"><rect x="0.75" y="0.75" width="9.3" height="9.3" fill="none" stroke="#707070" stroke-width="1.5"/><rect x="3" y="2.9" width="4.8" height="1.4" fill="#707070"/></svg>
<span class="t" style="left:1160.40px;top:139.55px;font-size:11.3px;font-weight:400;color:#747474;letter-spacing:-0.067px;">zx-0-50</span>
<svg style="position:absolute;left:1301.1px;top:142.20000000000002px;" width="12.4" height="9.2" viewBox="0 0 12.4 9.2"><path fill-rule="evenodd" d="M0.2 4.6 C1.4 1.4 3.8 0 6.2 0 C8.6 0 11 1.4 12.2 4.6 C11 7.8 8.6 9.2 6.2 9.2 C3.8 9.2 1.4 7.8 0.2 4.6 Z M6.2 1.5 A3.1 3.1 0 1 0 6.2 7.7 A3.1 3.1 0 1 0 6.2 1.5 Z" fill="#1c2230"/><circle cx="6.2" cy="4.6" r="1.05" fill="#1c2230"/></svg>
<svg style="position:absolute;left:1106.8px;top:176.4px;" width="4.2" height="3.4" viewBox="0 0 4.2 3.4"><path d="M0 0 H4.2 L2.1 3.4 Z" fill="#b0b0b0"/></svg>
<span class="t" style="left:1116.50px;top:170.05px;font-size:11.4px;font-weight:700;color:#272c36;letter-spacing:-0.249px;">Exterior Bound</span>
<svg style="position:absolute;left:1137.9px;top:203px;" width="11" height="12" viewBox="0 0 11 12"><path d="M5.5 0.8 L10.2 3.3 V8.6 L5.5 11.2 L0.8 8.6 V3.3 Z M0.8 3.3 L5.5 5.9 L10.2 3.3 M5.5 5.9 V11.2" fill="none" stroke="#555" stroke-width="1.3" stroke-linejoin="round"/></svg>
<span class="t" style="left:1160.40px;top:200.95px;font-size:11.3px;font-weight:400;color:#747474;letter-spacing:-0.178px;">Rectangular Bound</span>
<svg style="position:absolute;left:1301.1px;top:203.8px;" width="12.4" height="9.2" viewBox="0 0 12.4 9.2"><path fill-rule="evenodd" d="M0.2 4.6 C1.4 1.4 3.8 0 6.2 0 C8.6 0 11 1.4 12.2 4.6 C11 7.8 8.6 9.2 6.2 9.2 C3.8 9.2 1.4 7.8 0.2 4.6 Z M6.2 1.5 A3.1 3.1 0 1 0 6.2 7.7 A3.1 3.1 0 1 0 6.2 1.5 Z" fill="#1c2230"/><circle cx="6.2" cy="4.6" r="1.05" fill="#1c2230"/></svg>
<svg style="position:absolute;left:1106.8px;top:237.8px;" width="4.2" height="3.4" viewBox="0 0 4.2 3.4"><path d="M0 0 H4.2 L2.1 3.4 Z" fill="#b0b0b0"/></svg>
<span class="t" style="left:1116.50px;top:231.55px;font-size:11.4px;font-weight:700;color:#272c36;letter-spacing:-0.176px;">Contour Boundary</span>
<svg style="position:absolute;left:1137.4px;top:265.6px;" width="12" height="11" viewBox="0 0 12 11"><path d="M1.6 0 V9.5 H11.2 M1.6 4.2 H7.6 L9.6 9.5" fill="none" stroke="#444" stroke-width="1.45"/></svg>
<span class="t" style="left:1160.40px;top:262.25px;font-size:11.3px;font-weight:400;color:#747474;letter-spacing:-0.063px;">Contour Boundary-1</span>
<svg style="position:absolute;left:1301.1px;top:264.9px;" width="12.4" height="9.2" viewBox="0 0 12.4 9.2"><path fill-rule="evenodd" d="M0.2 4.6 C1.4 1.4 3.8 0 6.2 0 C8.6 0 11 1.4 12.2 4.6 C11 7.8 8.6 9.2 6.2 9.2 C3.8 9.2 1.4 7.8 0.2 4.6 Z M6.2 1.5 A3.1 3.1 0 1 0 6.2 7.7 A3.1 3.1 0 1 0 6.2 1.5 Z" fill="#1c2230"/><circle cx="6.2" cy="4.6" r="1.05" fill="#1c2230"/></svg>
<svg style="position:absolute;left:1137.4px;top:296.8px;" width="12" height="11" viewBox="0 0 12 11"><path d="M1.6 0 V9.5 H11.2 M1.6 4.2 H7.6 L9.6 9.5" fill="none" stroke="#444" stroke-width="1.45"/></svg>
<span class="t" style="left:1160.40px;top:293.55px;font-size:11.3px;font-weight:400;color:#747474;letter-spacing:-0.041px;">Contour Boundary-2</span>
<svg style="position:absolute;left:1301.1px;top:296.09999999999997px;" width="12.4" height="9.2" viewBox="0 0 12.4 9.2"><path fill-rule="evenodd" d="M0.2 4.6 C1.4 1.4 3.8 0 6.2 0 C8.6 0 11 1.4 12.2 4.6 C11 7.8 8.6 9.2 6.2 9.2 C3.8 9.2 1.4 7.8 0.2 4.6 Z M6.2 1.5 A3.1 3.1 0 1 0 6.2 7.7 A3.1 3.1 0 1 0 6.2 1.5 Z" fill="#1c2230"/><circle cx="6.2" cy="4.6" r="1.05" fill="#1c2230"/></svg>
<svg style="position:absolute;left:1106.8px;top:329.79999999999995px;" width="4.2" height="3.4" viewBox="0 0 4.2 3.4"><path d="M0 0 H4.2 L2.1 3.4 Z" fill="#b0b0b0"/></svg>
<span class="t" style="left:1116.50px;top:323.65px;font-size:11.4px;font-weight:700;color:#272c36;letter-spacing:-0.415px;">Snap Line</span>
<div style="position:absolute;left:1131.1px;top:347.2px;width:187.7px;height:30.4px;background:#f0f0f0;"></div>
<svg style="position:absolute;left:1137.2px;top:357.2px;" width="13" height="11" viewBox="0 0 13 11"><path d="M1.7 0.1 V10.9 M8 0.1 V10.9 M0.3 1.4 H9.4 M0.3 9.6 H9.4" fill="none" stroke="#555" stroke-width="1.35"/><g fill="#555"><rect x="10.8" y="0.6" width="1.6" height="1.8"/><rect x="10.8" y="4.5" width="1.6" height="1.8"/><rect x="10.8" y="8.6" width="1.6" height="1.8"/></g></svg>
<span class="t" style="left:1160.40px;top:354.85px;font-size:11.3px;font-weight:400;color:#747474;letter-spacing:-0.207px;">Perpendicular Snap Line-1</span>
<svg style="position:absolute;left:1301.2px;top:357.5px;" width="12.4" height="9.2" viewBox="0 0 12.4 9.2"><path fill-rule="evenodd" d="M0.2 4.6 C1.4 1.4 3.8 0 6.2 0 C8.6 0 11 1.4 12.2 4.6 C11 7.8 8.6 9.2 6.2 9.2 C3.8 9.2 1.4 7.8 0.2 4.6 Z M6.2 1.5 A3.1 3.1 0 1 0 6.2 7.7 A3.1 3.1 0 1 0 6.2 1.5 Z" fill="#1c2230"/><circle cx="6.2" cy="4.6" r="1.05" fill="#1c2230"/></svg>
<span class="t" style="left:1116.50px;top:385.15px;font-size:11.4px;font-weight:700;color:#272c36;letter-spacing:-0.063px;">Internal Zone</span>
<span class="t" style="left:1116.50px;top:415.15px;font-size:11.4px;font-weight:700;color:#272c36;letter-spacing:-0.145px;">Door Opening</span>
<span class="t" style="left:1116.50px;top:445.15px;font-size:11.4px;font-weight:700;color:#272c36;letter-spacing:-0.198px;">Collision Detect Area</span>
<span class="t" style="left:1116.50px;top:475.15px;font-size:11.4px;font-weight:700;color:#272c36;letter-spacing:-0.274px;">Connector</span>
<span class="t" style="left:1116.50px;top:505.15px;font-size:11.4px;font-weight:700;color:#272c36;letter-spacing:-0.271px;">Custom structure</span>
<div style="position:absolute;left:1332.1px;top:261.4px;width:5.7px;height:281.8px;background:#dedede;border-radius:3px 3px 0 0;"></div>
<svg style="position:absolute;left:1095px;top:532px;" width="10" height="10" viewBox="0 0 10 10"><path d="M0.7 0.6 L9.2 8.7 M0 6.2 L3.6 9.1" stroke="#8a8a8a" stroke-width="1" fill="none"/></svg>
<svg style="position:absolute;left:1329px;top:405px;" width="18" height="48" viewBox="0 0 18 48"><path d="M18 0 C8 3 1 8 1 16 V32 C1 40 8 45 18 48 Z" fill="#fff" fill-opacity="0.9"/><path d="M7.6 18.2 L12.9 23.5 L7.6 28.8" fill="none" stroke="#555" stroke-width="1.2"/></svg>
<div style="position:absolute;left:300px;top:783.5px;width:1047px;height:38px;background:#fff;"></div>
<div style="position:absolute;left:866px;top:783.5px;width:481px;height:38px;background:#fff;border-left:1px solid #ececec;box-sizing:border-box;"></div>
<span class="t" style="left:877.00px;top:795.55px;font-size:13px;font-weight:400;color:#727272;letter-spacing:-0.113px;">Explosion Offsets</span>
<div style="position:absolute;left:1000px;top:804.3px;width:145px;height:1.2px;background:#e6e6e6;"></div>
<svg style="position:absolute;left:989.5px;top:800.4px;" width="15.4" height="15.4" viewBox="0 0 15.4 15.4"><circle cx="7.7" cy="7.7" r="7.4" fill="#fff" fill-opacity="0.9"/><circle cx="7.7" cy="7.7" r="5.6" fill="#1e78f8"/></svg>
<div style="position:absolute;left:1156.8px;top:783.5px;width:1px;height:38px;background:#ececec;"></div>
<div style="position:absolute;left:1194.6px;top:783.5px;width:1px;height:38px;background:#ececec;"></div>
<div style="position:absolute;left:1232.6px;top:783.5px;width:1px;height:38px;background:#ececec;"></div>
<div style="position:absolute;left:1270.4px;top:783.5px;width:1px;height:38px;background:#ececec;"></div>
<div style="position:absolute;left:1308.2px;top:783.5px;width:1px;height:38px;background:#ececec;"></div>
<span class="t" style="left:1166.97px;top:794.35px;font-size:13.5px;font-weight:700;color:#999;transform:scaleX(0.82);">2D</span>
<span class="t" style="left:1205.17px;top:794.35px;font-size:13.5px;font-weight:700;color:#999;transform:scaleX(0.82);">3D</span>
<svg style="position:absolute;left:1246px;top:796px;" width="12" height="12.8" viewBox="0 0 12 12.8"><path d="M6 0.8 L11.2 3.6 V9.3 L6 12 L0.8 9.3 V3.6 Z M0.8 3.6 L6 6.4 L11.2 3.6 M6 6.4 V12" fill="none" stroke="#999" stroke-width="1.5" stroke-linejoin="round"/></svg>
<svg style="position:absolute;left:1282.4px;top:796.9px;" width="15.2" height="11.2" viewBox="0 0 15.2 11.2"><path fill-rule="evenodd" d="M0 5.6 C2.4 1.4 5 0 7.6 0 C10.2 0 12.8 1.4 15.2 5.6 C12.8 9.8 10.2 11.2 7.6 11.2 C5 11.2 2.4 9.8 0 5.6 Z M7.6 1.9 A3.7 3.7 0 1 0 7.6 9.3 A3.7 3.7 0 1 0 7.6 1.9 Z" fill="#999"/><circle cx="7.6" cy="5.6" r="1.8" fill="#999"/></svg>
<svg style="position:absolute;left:1321.8px;top:796px;" width="12.4" height="12.4" viewBox="0 0 12.4 12.4"><circle cx="6.2" cy="6.2" r="6.2" fill="#999"/><rect x="5.3" y="2.7" width="1.8" height="4.6" fill="#fff"/><rect x="5.3" y="8.3" width="1.8" height="1.7" fill="#fff"/></svg>
<svg style="position:absolute;left:155.9px;top:395.6px;" width="127.8" height="69.2" viewBox="0 0 127.8 69.2"><rect x="2.10" y="2.10" width="123.60" height="65.00" rx="3.40" fill="none" stroke="#fb1711" stroke-width="4.2"/></svg>
<svg style="position:absolute;left:861.3px;top:263.1px;" width="106.8" height="118.0" viewBox="0 0 106.8 118.0"><rect x="1.85" y="1.85" width="103.10" height="114.30" rx="4.15" fill="none" stroke="#fb1711" stroke-width="3.7"/></svg>
<svg style="position:absolute;left:1117.3px;top:336.3px;" width="223.6" height="48.3" viewBox="0 0 223.6 48.3"><rect x="1.85" y="1.85" width="219.90" height="44.60" rx="4.15" fill="none" stroke="#fb1711" stroke-width="3.7"/></svg>
<svg style="position:absolute;left:1348.1px;top:80.8px;" width="247.1" height="465.5" viewBox="0 0 247.1 465.5"><rect x="1.85" y="1.85" width="243.40" height="461.80" rx="4.15" fill="none" stroke="#fb1711" stroke-width="3.7"/></svg>
</div></body></html>
